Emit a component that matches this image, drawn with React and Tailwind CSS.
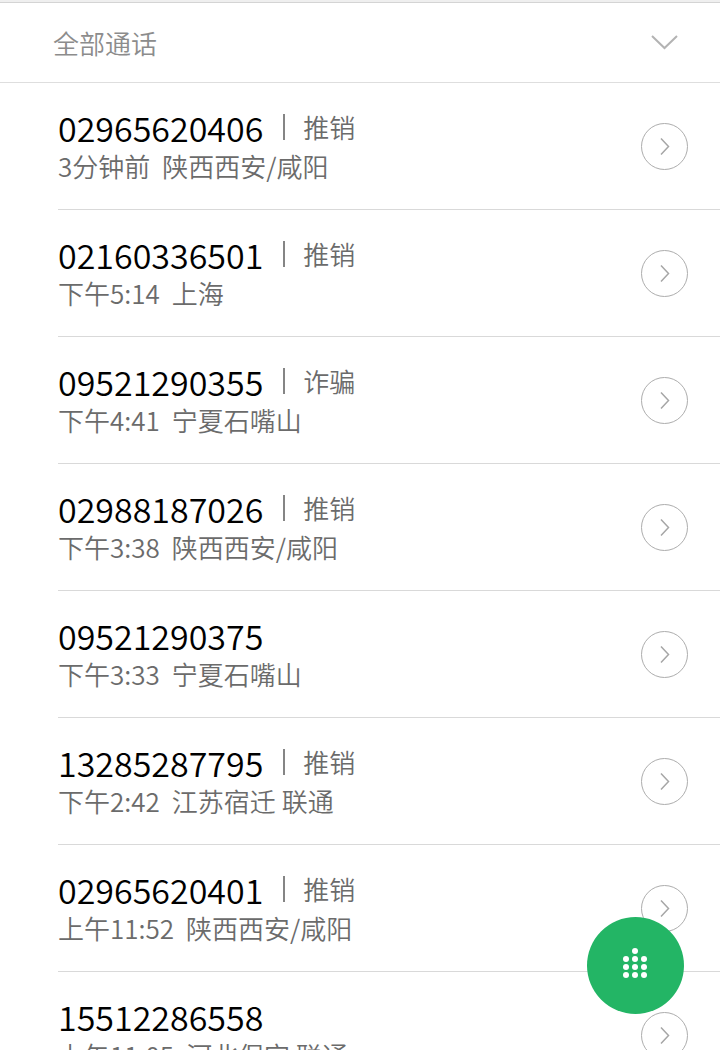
const calls = [
  { number: '02965620406', tag: '推销', time: '3分钟前', place: '陕西西安/咸阳' },
  { number: '02160336501', tag: '推销', time: '下午5:14', place: '上海' },
  { number: '09521290355', tag: '诈骗', time: '下午4:41', place: '宁夏石嘴山' },
  { number: '02988187026', tag: '推销', time: '下午3:38', place: '陕西西安/咸阳' },
  { number: '09521290375', time: '下午3:33', place: '宁夏石嘴山' },
  { number: '13285287795', tag: '推销', time: '下午2:42', place: '江苏宿迁 联通' },
  { number: '02965620401', tag: '推销', time: '上午11:52', place: '陕西西安/咸阳' },
  { number: '15512286558', time: '上午11:05', place: '河北保定 联通' },
];

function CallRow({ call }) {
  return (
    <li className="ml-[58px] flex h-[127px] shrink-0 items-center justify-between border-b border-[#d9d9d9] pr-8">
      <div className="min-w-0 whitespace-nowrap">
        <div className="flex h-10 items-start">
          <span className="mt-1 text-[34px] leading-9 text-black">{call.number}</span>
          {call.tag && (
            <span className="mt-2 ml-5 border-l-2 border-[#858585] pl-[18px] text-[26px] leading-[26px] text-[#6b6b6b]">
              {call.tag}
            </span>
          )}
        </div>
        <p className="flex gap-3 text-[26px] leading-10 text-[#6b6b6b]">
          <span>{call.time}</span>
          <span>{call.place}</span>
        </p>
      </div>
      <button
        type="button"
        aria-label={`${call.number} 详情`}
        className="flex size-[47px] shrink-0 items-center justify-center rounded-full border border-[#adadad] text-[#a6a6a6]"
      >
        <svg viewBox="0 0 11 17" className="h-[17px] w-[11px]" fill="none" stroke="currentColor" strokeWidth="1.5">
          <path d="M2 0.5l7.5 8L2 16.5" />
        </svg>
      </button>
    </li>
  );
}

function DialPadIcon() {
  const dots = [
    [12, 3],
    [3, 11], [12, 11], [21, 11],
    [3, 19], [12, 19], [21, 19],
    [3, 27], [12, 27], [21, 27],
  ];
  return (
    <svg viewBox="0 0 25 30" className="mb-[5px] h-[30px] w-[25px]" fill="currentColor">
      {dots.map(([x, y]) => (
        <circle key={`${x}-${y}`} cx={x} cy={y} r="3" />
      ))}
    </svg>
  );
}

export default function App() {
  return (
    <div className="flex h-screen flex-col overflow-hidden bg-white font-['Noto_Sans_CJK_SC',sans-serif] font-[350]">
      <div className="h-[3px] shrink-0 border-b border-[#d4d4d4] bg-[#efefef]" />
      <button
        type="button"
        className="flex h-20 w-full shrink-0 items-center justify-between border-b border-[#dedede] pr-[42px] pl-[53px] text-[26px] text-[#8c8c8c]"
      >
        <span>全部通话</span>
        <svg viewBox="0 0 27 15" className="h-[15px] w-[27px]" fill="none" stroke="#b3b3b3" strokeWidth="2">
          <path d="M1 1l12.5 12L26 1" />
        </svg>
      </button>
      <ul className="flex min-h-0 flex-1 flex-col overflow-y-auto [scrollbar-width:none]">
        {calls.map((call) => (
          <CallRow key={call.number} call={call} />
        ))}
      </ul>
      <button
        type="button"
        aria-label="拨号盘"
        className="fixed right-9 bottom-9 flex size-[97px] items-center justify-center rounded-full bg-[#23b565] text-white"
      >
        <DialPadIcon />
      </button>
    </div>
  );
}
